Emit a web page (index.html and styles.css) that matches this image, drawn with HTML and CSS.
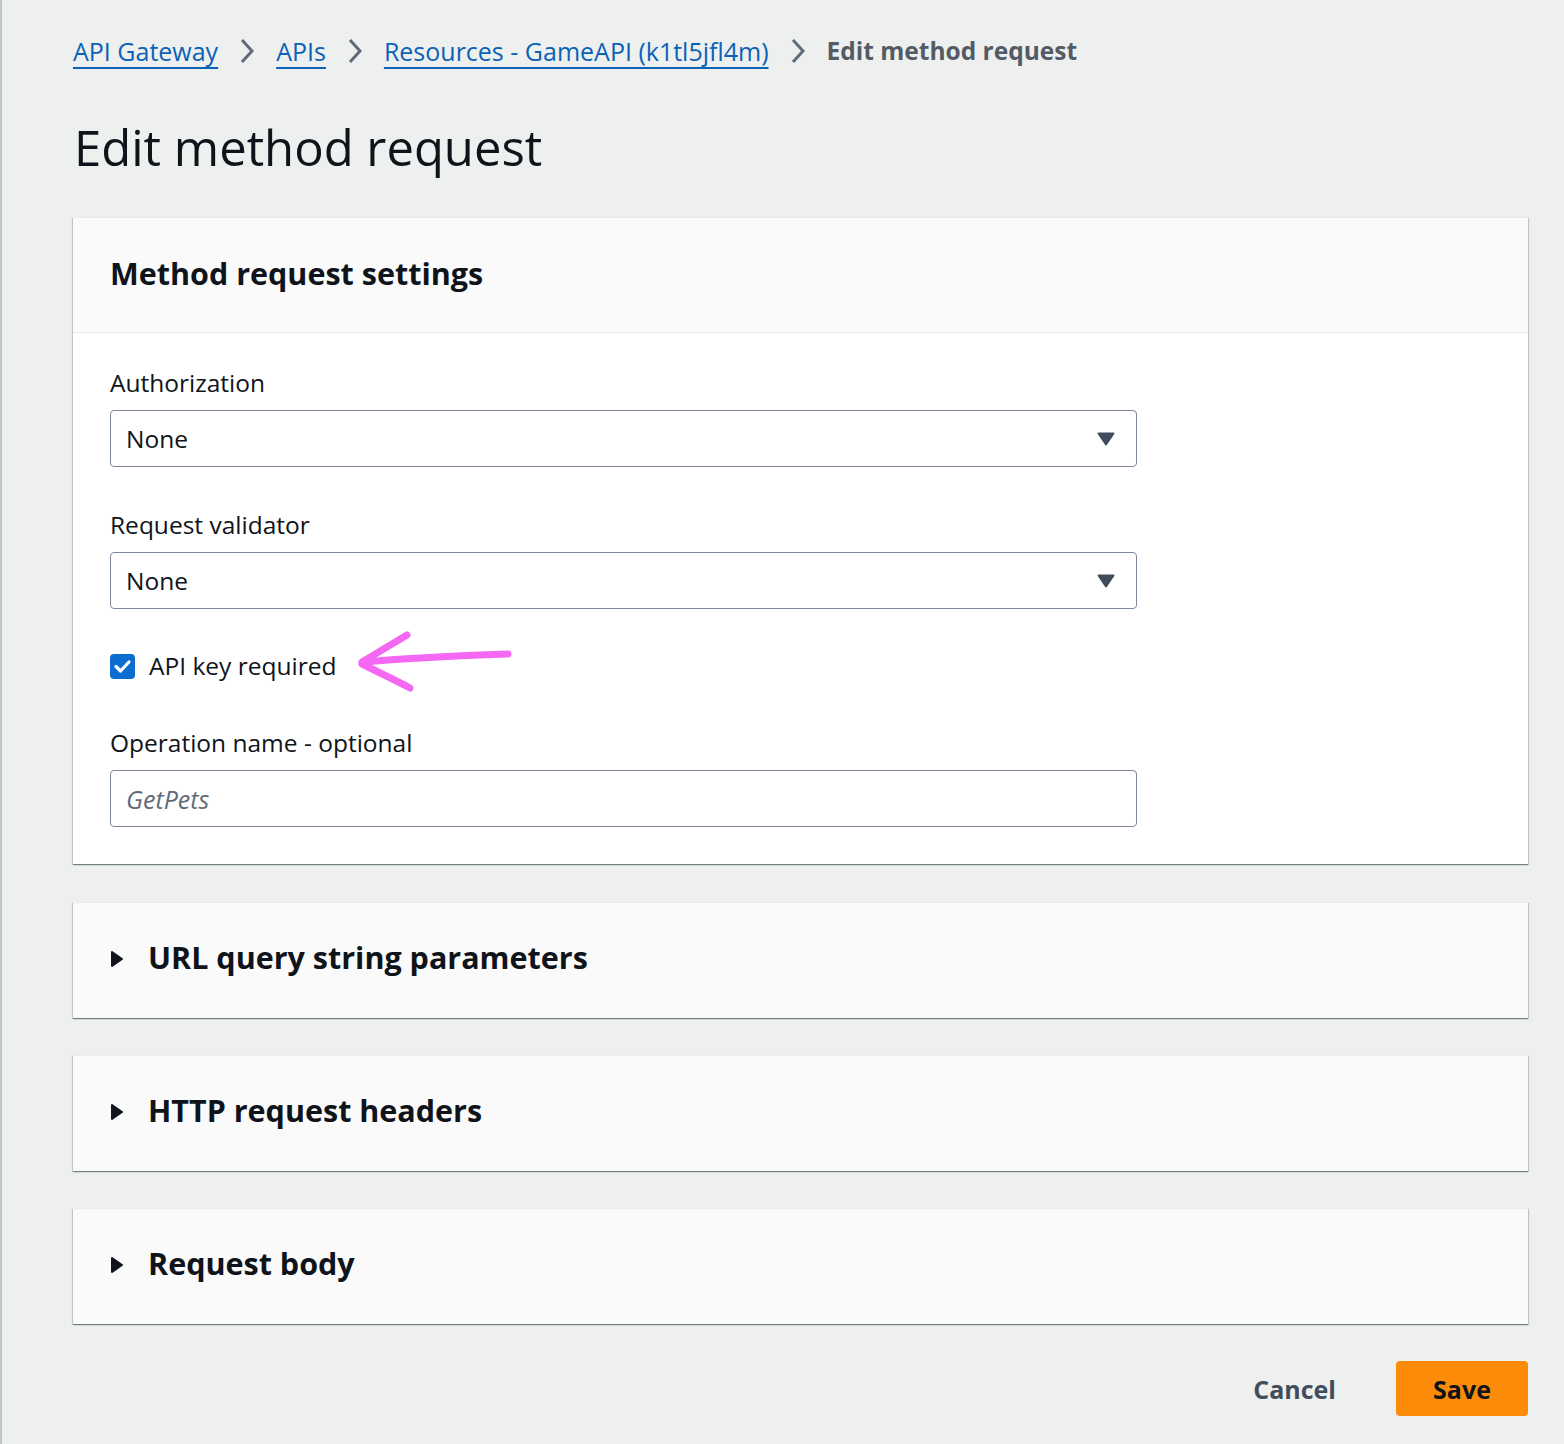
FILE: index.html
```html
<!DOCTYPE html>
<html lang="en">
<head>
<meta charset="utf-8">
<title>Edit method request</title>
<link rel="stylesheet" href="styles.css">
</head>
<body>
<div class="page">
  <nav class="crumbs">
    <a href="#" class="crumb-link">API Gateway</a>
    <svg class="chev" viewBox="0 0 16 28" width="16" height="28"><path d="M3 3 L13 14 L3 25" fill="none" stroke="#5f6b7a" stroke-width="3"/></svg>
    <a href="#" class="crumb-link">APIs</a>
    <svg class="chev" viewBox="0 0 16 28" width="16" height="28"><path d="M3 3 L13 14 L3 25" fill="none" stroke="#5f6b7a" stroke-width="3"/></svg>
    <a href="#" class="crumb-link">Resources - GameAPI (k1tl5jfl4m)</a>
    <svg class="chev" viewBox="0 0 16 28" width="16" height="28"><path d="M3 3 L13 14 L3 25" fill="none" stroke="#5f6b7a" stroke-width="3"/></svg>
    <span class="crumb-current">Edit method request</span>
  </nav>

  <h1 class="title">Edit method request</h1>

  <section class="card">
    <header class="card-head">
      <h2 class="card-title">Method request settings</h2>
    </header>
    <div class="card-body">
      <div class="field">
        <label class="label">Authorization</label>
        <div class="select">
          <span>None</span>
          <svg class="caret" viewBox="0 0 18 14" width="18" height="14"><path d="M1.5 1.5 H16.5 L9 12.5 Z" fill="#414d5c" stroke="#414d5c" stroke-width="2" stroke-linejoin="round"/></svg>
        </div>
      </div>
      <div class="field">
        <label class="label">Request validator</label>
        <div class="select">
          <span>None</span>
          <svg class="caret" viewBox="0 0 18 14" width="18" height="14"><path d="M1.5 1.5 H16.5 L9 12.5 Z" fill="#414d5c" stroke="#414d5c" stroke-width="2" stroke-linejoin="round"/></svg>
        </div>
      </div>
      <div class="check-row">
        <span class="checkbox">
          <svg viewBox="0 0 25 25" width="25" height="25"><path d="M6 12.5 L10.5 17 L19 8" fill="none" stroke="#fff" stroke-width="3.2" stroke-linecap="round" stroke-linejoin="round"/></svg>
        </span>
        <span class="check-label">API key required</span>
        <svg class="annot" viewBox="0 0 170 75" width="170" height="75">
          <g fill="none" stroke="#f468f4" stroke-width="7" stroke-linecap="round" stroke-linejoin="round">
            <path d="M57 10 L12 37"/>
            <path d="M12 39 C 30 48, 45 55, 60 63"/>
            <path d="M14 37 C 60 33, 100 31, 158 29"/>
          </g>
        </svg>
      </div>
      <div class="field">
        <label class="label">Operation name - optional</label>
        <div class="input"><span class="placeholder">GetPets</span></div>
      </div>
    </div>
  </section>

  <section class="card collapsed">
    <div class="exp-head">
      <svg class="tri" viewBox="0 0 14 18" width="14" height="18"><path d="M2 2 L12 9 L2 16 Z" fill="#0f141a" stroke="#0f141a" stroke-width="2" stroke-linejoin="round"/></svg>
      <h2 class="exp-title">URL query string parameters</h2>
    </div>
  </section>

  <section class="card collapsed">
    <div class="exp-head">
      <svg class="tri" viewBox="0 0 14 18" width="14" height="18"><path d="M2 2 L12 9 L2 16 Z" fill="#0f141a" stroke="#0f141a" stroke-width="2" stroke-linejoin="round"/></svg>
      <h2 class="exp-title">HTTP request headers</h2>
    </div>
  </section>

  <section class="card collapsed">
    <div class="exp-head">
      <svg class="tri" viewBox="0 0 14 18" width="14" height="18"><path d="M2 2 L12 9 L2 16 Z" fill="#0f141a" stroke="#0f141a" stroke-width="2" stroke-linejoin="round"/></svg>
      <h2 class="exp-title">Request body</h2>
    </div>
  </section>

  <div class="actions">
    <button class="btn-link">Cancel</button>
    <button class="btn-primary">Save</button>
  </div>
</div>
</body>
</html>
```

FILE: styles.css
```css
html, body {
  margin: 0;
  padding: 0;
  background: #eef0ef;
}
body {
  font-family: "Open Sans", "Noto Sans", sans-serif;
  color: #0f141a;
}
.page {
  border-left: 2px solid #c3c7c9;
  min-height: 1444px;
  box-sizing: border-box;
  padding: 33px 36px 0 71px;
}
.crumbs {
  display: flex;
  align-items: center;
  height: 36px;
  font-size: 25px;
  line-height: 36px;
}
.crumb-link {
  color: #0b62b7;
  text-decoration: underline;
  text-decoration-thickness: 2px;
  text-underline-offset: 6px;
}
.chev {
  margin: 0 21px;
  flex: none;
}
.crumb-current {
  color: #545b64;
  font-weight: 700;
  font-size: 24.5px;
}
.title {
  margin: 48px 0 0 1px;
  font-size: 49px;
  line-height: 60px;
  font-weight: 400;
  color: #0f141a;
}
.card {
  margin-top: 40px;
  background: #fff;
  border-top: 1px solid #e9ebed;
  box-shadow: 0 1px 1px 0 rgba(0, 28, 36, 0.35), 1px 1px 1px 0 rgba(0, 28, 36, 0.15), -1px 1px 1px 0 rgba(0, 28, 36, 0.15);
}
.card-head {
  background: #fafafa;
  border-bottom: 1px solid #e9ebed;
  padding: 35px 37px 39px;
}
.card-title {
  margin: 0;
  font-size: 30.5px;
  line-height: 40px;
  font-weight: 700;
}
.card-body {
  padding: 33px 37px 37px;
  display: flex;
  flex-direction: column;
  gap: 41px;
}
.field {
  display: flex;
  flex-direction: column;
  gap: 10px;
}
.label {
  font-size: 24.5px;
  line-height: 34px;
}
.select, .input {
  width: 1027px;
  height: 57px;
  box-sizing: border-box;
  border: 1px solid #7d8998;
  border-radius: 4px;
  display: flex;
  align-items: center;
  justify-content: space-between;
  padding: 0 21px 0 15px;
  font-size: 24.5px;
}
.caret {
  flex: none;
}
.placeholder {
  font-style: italic;
  color: #5f6b7a;
  font-size: 25px;
}
.check-row {
  position: relative;
  display: flex;
  align-items: center;
  gap: 14px;
  height: 34px;
  margin-top: -1px;
  margin-bottom: 2px;
}
.checkbox {
  width: 25px;
  height: 25px;
  background: #0b6dd0;
  border-radius: 4px;
  display: flex;
}
.check-label {
  font-size: 24.5px;
  line-height: 34px;
}
.annot {
  position: absolute;
  left: 240px;
  top: -24px;
}
.collapsed {
  margin-top: 37px;
  background: #fafafa;
}
.card.collapsed:nth-of-type(2) {
  margin-top: 38px;
}
.exp-head {
  display: flex;
  align-items: center;
  gap: 24px;
  padding: 34px 37px 40px;
}
.tri {
  flex: none;
  margin-top: 2px;
}
.exp-title {
  margin: 0;
  font-size: 30.5px;
  line-height: 41px;
  font-weight: 700;
}
.actions {
  display: flex;
  justify-content: flex-end;
  align-items: center;
  gap: 22px;
  margin-top: 37px;
}
.btn-link, .btn-primary {
  font-family: inherit;
  font-size: 25px;
  font-weight: 700;
  height: 55px;
  border: none;
  border-radius: 4px;
  cursor: pointer;
}
.btn-link {
  background: transparent;
  color: #414d5c;
  padding: 0 38px;
}
.btn-primary {
  background: #fd8b0a;
  color: #0f141a;
  width: 132px;
}
```
